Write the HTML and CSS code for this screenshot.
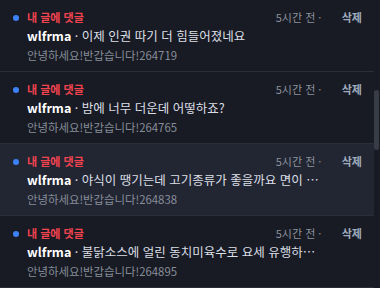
FILE: index.html
```html
<!DOCTYPE html>
<html lang="ko">
<head>
<meta charset="utf-8">
<link rel="stylesheet" href="styles.css">
</head>
<body>
<div class="wrap">
  <div class="list">
    <div class="item">
      <div class="head"><span class="dot"></span><span class="type">내 글에 댓글</span><span class="time">5시간 전 ·</span><span class="del">삭제</span></div>
      <div class="msg"><b class="user">wlfrma</b> · 이제 인권 따기 더 힘들어졌네요</div>
      <div class="post">안녕하세요!반갑습니다!264719</div>
    </div>
    <div class="item">
      <div class="head"><span class="dot"></span><span class="type">내 글에 댓글</span><span class="time">5시간 전 ·</span><span class="del">삭제</span></div>
      <div class="msg"><b class="user">wlfrma</b> · 밤에 너무 더운데 어떻하죠?</div>
      <div class="post">안녕하세요!반갑습니다!264765</div>
    </div>
    <div class="item hover">
      <div class="head"><span class="dot"></span><span class="type">내 글에 댓글</span><span class="time">5시간 전 ·</span><span class="del">삭제</span></div>
      <div class="msg"><b class="user">wlfrma</b> · 야식이 땡기는데 고기종류가 좋을까요 면이 ⋯</div>
      <div class="post">안녕하세요!반갑습니다!264838</div>
    </div>
    <div class="item">
      <div class="head"><span class="dot"></span><span class="type">내 글에 댓글</span><span class="time">5시간 전 ·</span><span class="del">삭제</span></div>
      <div class="msg"><b class="user">wlfrma</b> · 불닭소스에 얼린 동치미육수로 요세 유행하⋯</div>
      <div class="post">안녕하세요!반갑습니다!264895</div>
    </div>
  </div>
  <div class="scroll"><div class="thumb"></div></div>
</div>
</body>
</html>
```
FILE: styles.css
```css
* { box-sizing: border-box; }
html, body { margin: 0; padding: 0; }
body {
  background: #181b24;
  font-family: "Noto Sans CJK KR", "Noto Sans", sans-serif;
  width: 380px;
  height: 288px;
  overflow: hidden;
}
.wrap { display: flex; height: 288px; }
.list { width: 374px; flex: none; }
.item {
  height: 72px;
  border-bottom: 1px solid #2a2e39;
  padding: 8px 0 0 27px;
  position: relative;
}
.item.hover { background: #222633; }
.head {
  display: flex;
  align-items: center;
  height: 18px;
  font-size: 11px;
  position: relative;
}
.dot {
  position: absolute;
  left: -14px;
  top: 7px;
  width: 6px;
  height: 6px;
  border-radius: 50%;
  background: #3b82f6;
}
.type { color: #f2434f; font-weight: 700; }
.time { color: #8c929c; margin-left: auto; width: 66px; }
.del { color: #9fabbd; font-weight: 700; margin-right: 12px; }
.msg {
  font-size: 12.5px;
  color: #dcdfe5;
  height: 19px;
  line-height: 19px;
  white-space: nowrap;
}
.user { color: #ffffff; font-weight: 700; }
.post {
  font-size: 11.4px;
  color: #878d98;
  line-height: 18px;
  margin-top: 1px;
}
.scroll { width: 6px; flex: none; padding-top: 90px; }
.thumb { width: 5px; height: 60px; background: #383c47; border-radius: 3px; }
```
